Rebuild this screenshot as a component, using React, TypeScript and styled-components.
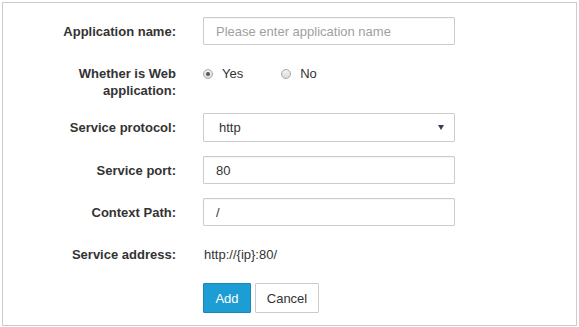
import styled, { createGlobalStyle } from 'styled-components';

const GlobalStyle = createGlobalStyle`
    * {
        box-sizing: border-box;
    }

    body {
        margin: 0;
        background: #fff;
        font-family: "Liberation Sans", Arial, sans-serif;
        font-size: 13px;
        color: #333;
    }
`;

const App = () => {
    return (
        <>
        <GlobalStyle />
        <Panel>
            <Form>
                <Row>
                    <Label>Application name:</Label>
                    <TextInput placeholder="Please enter application name" />
                </Row>

                <Row>
                    <Label>Whether is Web<br />application:</Label>
                    <RadioGroup>
                        <RadioOption>
                            <RadioDot checked />
                            Yes
                        </RadioOption>
                        <RadioOption>
                            <RadioDot />
                            No
                        </RadioOption>
                    </RadioGroup>
                </Row>

                <Row>
                    <Label>Service protocol:</Label>
                    <SelectBox>
                        <span>http</span>
                        <Caret />
                    </SelectBox>
                </Row>

                <Row>
                    <Label>Service port:</Label>
                    <TextInput defaultValue="80" />
                </Row>

                <Row>
                    <Label>Context Path:</Label>
                    <TextInput defaultValue="/" />
                </Row>

                <Row>
                    <Label>Service address:</Label>
                    <StaticValue>http://{'{'}ip{'}'}:80/</StaticValue>
                </Row>

                <Row>
                    <span />
                    <Actions>
                        <Button primary>Add</Button>
                        <Button>Cancel</Button>
                    </Actions>
                </Row>
            </Form>
        </Panel>
        </>
    );
};

const Panel = styled.div`
    margin: 2px;
    width: 575px;
    height: 324px;
    border: 1px solid #cccccc;
    background: #fff;
`;

const Form = styled.form`
    display: flex;
    flex-direction: column;
    gap: 14px;
    padding-top: 14px;
`;

const Row = styled.div`
    display: grid;
    grid-template-columns: 173px 252px;
    column-gap: 27px;
    min-height: 28px;
    align-items: start;
`;

const Label = styled.label`
    padding-top: 6px;
    text-align: right;
    font-weight: bold;
    line-height: 17px;
    color: #333;
`;

const TextInput = styled.input`
    width: 252px;
    height: 28px;
    padding: 0 12px;
    border: 1px solid #cccccc;
    border-radius: 1px;
    font-family: inherit;
    font-size: 13px;
    color: #333;
    box-shadow: inset 0 1px 1px rgba(0, 0, 0, 0.04);
    outline: none;

    &::placeholder {
        color: #a0a0a0;
    }
`;

const SelectBox = styled.div`
    display: flex;
    align-items: center;
    justify-content: space-between;
    height: 29px;
    padding: 0 10px 0 15px;
    border: 1px solid #cccccc;
    border-radius: 1px;
    color: #333;
`;

const Caret = styled.span`
    width: 0;
    height: 0;
    border-left: 3px solid transparent;
    border-right: 3px solid transparent;
    border-top: 5px solid #3b3b52;
`;

const RadioGroup = styled.div`
    display: flex;
    gap: 38px;
    padding: 6px 0 0 0;
    line-height: 17px;
`;

const RadioOption = styled.label`
    display: flex;
    align-items: center;
    gap: 9px;
    color: #333;
`;

const RadioDot = styled.span<{ checked?: boolean }>`
    position: relative;
    width: 10px;
    height: 10px;
    border-radius: 50%;
    border: 1px solid #a6a6a6;
    background: linear-gradient(#f2f2f2, #dcdcdc);

    &::after {
        content: '';
        display: ${ props => props.checked ? 'block' : 'none' };
        position: absolute;
        left: 2px;
        top: 2px;
        width: 4px;
        height: 4px;
        border-radius: 50%;
        background: #555;
    }
`;

const StaticValue = styled.span`
    padding: 6px 0 0 1px;
    line-height: 17px;
    color: #333;
`;

const Actions = styled.div`
    display: flex;
    gap: 4px;
    padding-top: 1px;
`;

const Button = styled.button<{ primary?: boolean }>`
    height: 30px;
    width: ${ props => props.primary ? '48px' : '64px' };
    padding: 0;
    border: 1px solid ${ props => props.primary ? '#1786ba' : '#cccccc' };
    border-radius: 1px;
    background: ${ props => props.primary ? '#1c9dd3' : '#ffffff' };
    color: ${ props => props.primary ? '#ffffff' : '#333333' };
    font-family: inherit;
    font-size: 13px;
    cursor: pointer;
`;

export default App;
